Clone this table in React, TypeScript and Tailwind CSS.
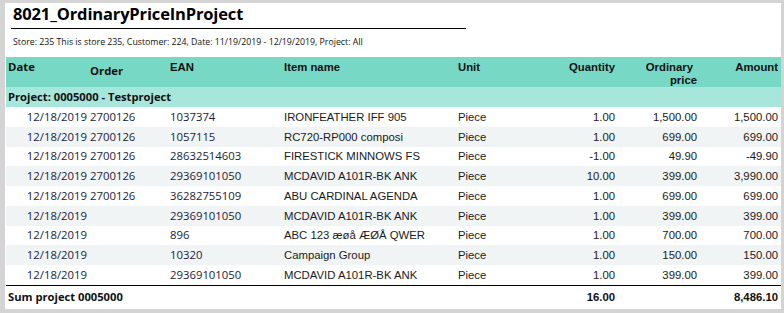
import React from "react";

const rows: string[][] = [
  ["12/18/2019", "2700126", "1037374", "IRONFEATHER IFF 905", "Piece", "1.00", "1,500.00", "1,500.00"],
  ["12/18/2019", "2700126", "1057115", "RC720-RP000 composi", "Piece", "1.00", "699.00", "699.00"],
  ["12/18/2019", "2700126", "28632514603", "FIRESTICK MINNOWS FS", "Piece", "-1.00", "49.90", "-49.90"],
  ["12/18/2019", "2700126", "29369101050", "MCDAVID A101R-BK ANK", "Piece", "10.00", "399.00", "3,990.00"],
  ["12/18/2019", "2700126", "36282755109", "ABU CARDINAL AGENDA", "Piece", "1.00", "699.00", "699.00"],
  ["12/18/2019", "", "29369101050", "MCDAVID A101R-BK ANK", "Piece", "1.00", "399.00", "399.00"],
  ["12/18/2019", "", "896", "ABC 123 æøå ÆØÅ QWER", "Piece", "1.00", "700.00", "700.00"],
  ["12/18/2019", "", "10320", "Campaign Group", "Piece", "1.00", "150.00", "150.00"],
  ["12/18/2019", "", "29369101050", "MCDAVID A101R-BK ANK", "Piece", "1.00", "399.00", "399.00"],
];

const seg = "font-['Open_Sans','Noto_Sans',sans-serif]";
const ari = "font-['Liberation_Sans',Arial,sans-serif]";

export default function App() {
  return (
    <div className="w-[784px] h-[313px] bg-[#d4d4d4] pt-[3px] pl-[5px] overflow-hidden">
      <div className="w-[776px] h-[306px] bg-white flex flex-col">
        <div className={`${seg} font-bold text-[16.5px] tracking-[-0.15px] leading-[22px] text-black pl-[8px] h-[22px]`}>
          8021_OrdinaryPriceInProject
        </div>
        <div className="ml-[6px] mt-[3px] w-[455px] h-[1px] bg-black" />
        <div className={`${seg} text-[8.75px] leading-[11px] text-[#111] pl-[8px] mt-[8px]`}>
          Store: 235 This is store 235, Customer: 224, Date: 11/19/2019 - 12/19/2019, Project: All
        </div>

        <div className="ml-[1px] mt-[9px] w-[775px] flex flex-col">
          {/* header */}
          <div className="flex h-[30px] bg-[#78d8c6] text-[11.33px] leading-[13px] font-bold text-[#111]">
            <div className={`${seg} w-[82px] pl-[2px] pt-[3px]`}>Date</div>
            <div className={`${seg} w-[80px] pl-[2px] pt-[7px]`}>Order</div>
            <div className={`${ari} w-[114px] pl-[2px] pt-[4px]`}>EAN</div>
            <div className={`${ari} w-[174px] pl-[2px] pt-[4px]`}>Item name</div>
            <div className={`${ari} w-[84px] pl-[2px] pt-[4px]`}>Unit</div>
            <div className={`${ari} w-[77px] pr-[2px] pt-[4px] text-right`}>Quantity</div>
            <div className={`${ari} w-[82px] pr-[2px] pt-[4px] text-right flex flex-col items-end`}>
              <span className="mr-[4px]">Ordinary</span>
              <span>price</span>
            </div>
            <div className={`${ari} w-[82px] pr-[3px] pt-[4px] text-right`}>Amount</div>
          </div>

          {/* project row */}
          <div className={`${seg} h-[20px] bg-[#a7e6db] flex items-center pl-[2px] text-[11.2px] leading-[14px] font-bold text-[#111]`}>
            Project: 0005000 - Testproject
          </div>

          {rows.map((r, i) => (
            <div
              key={i}
              className={`flex items-center h-[19.75px] text-[11.33px] leading-[14px] ${i % 2 === 1 ? "bg-[#f1f4f5]" : "bg-white"}`}
            >
              <div className={`${seg} w-[82px] pr-[1px] text-right text-[#1c1c38]`}>{r[0]}</div>
              <div className={`${seg} w-[80px] pl-[2px] text-[#1c1c38]`}>{r[1]}</div>
              <div className={`${seg} w-[114px] pl-[2px] text-[#1c1c38]`}>{r[2]}</div>
              <div className={`${ari} w-[174px] pl-[2px] text-[#1a1a1a] whitespace-nowrap`}>{r[3]}</div>
              <div className={`${ari} w-[84px] pl-[2px] text-[#1a1a1a]`}>{r[4]}</div>
              <div className={`${ari} w-[77px] pr-[2px] text-right text-[#1a1a1a]`}>{r[5]}</div>
              <div className={`${ari} w-[82px] pr-[2px] text-right text-[#1a1a1a]`}>{r[6]}</div>
              <div className={`${ari} w-[82px] pr-[3px] text-right text-[#1a1a1a]`}>{r[7]}</div>
            </div>
          ))}

          <div className="h-[1px] bg-black" />

          <div className="flex items-baseline pt-[4px] leading-[14px] font-bold text-[#111]">
            <div className={`${seg} w-[534px] pl-[2px] text-[11.2px]`}>Sum project 0005000</div>
            <div className={`${ari} w-[77px] pr-[2px] text-right text-[11.33px]`}>16.00</div>
            <div className="w-[82px]" />
            <div className={`${ari} w-[82px] pr-[3px] text-right text-[11.33px]`}>8,486.10</div>
          </div>
        </div>
      </div>
    </div>
  );
}
